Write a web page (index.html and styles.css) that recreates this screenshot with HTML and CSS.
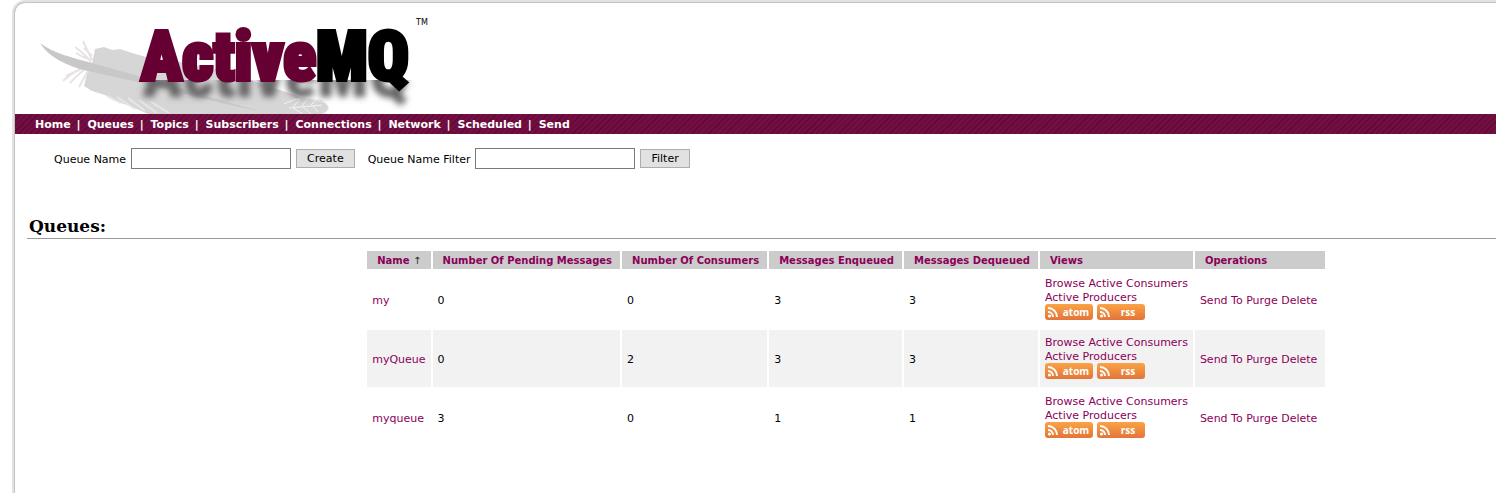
FILE: index.html
```html
<!doctype html>
<html lang="en">
<head>
    <meta charset="utf-8">
    <title>Queues</title>
    <link rel="stylesheet" href="styles.css">
</head>
<body>
<div class="page">
    <header class="header">
        <svg class="logo" width="420" height="111" viewBox="15 3 420 111" role="img" aria-label="ActiveMQ">
            <defs>
                <filter id="soft" x="-5%" y="-30%" width="110%" height="160%"><feGaussianBlur stdDeviation="3" /></filter>
                <clipPath id="ground"><rect x="120" y="80" width="300" height="34" /></clipPath>
            </defs>
            <path d="M92 64L95 49L104 47L112 50L120 49L132 53L150 58L180 62L220 70L262 84L300 97L322 100L329 107L325 114H148L139 110L127 105L116 101L105 95L92 91L84 86L88 70Z" fill="#d6d6d6" />
            <path d="M91 62Q86 55 75 47M91 60Q82 57 76 53M92 60L83 41M92 56L84 48M89 66Q76 69 63 81M89 67Q80 72 70 83M89 69L79 87M88 66L66 76" fill="none" stroke="#e8e2e5" stroke-width="2" />
            <path d="M40 43C53 53 73 58 92 63L142 77L200 94L262 112L200 98L142 83L88 71C65 66 48 56 40 43Z" fill="#c8c8c8" />
            <path d="M107 96l14 7M117 97l18 12M128 98l17 13M139 100l18 13M151 102l18 11" fill="none" stroke="#e6e6e6" stroke-width="2" />
            <path d="M284 104Q302 93 326 103Q333 110 322 114M289 108l33-3M293 107l7-8M302 106l6-8M311 105l6-6M293 108l10 6M303 107l8 7M313 106l5 6" fill="none" stroke="#f5f2f3" stroke-width="1" />
            <g clip-path="url(#ground)"><text class="logo-shade" x="142" y="97" filter="url(#soft)" aria-hidden="true">ActiveMQ</text></g>
            <text class="logo-text" x="141" y="80"><tspan class="logo-active">Active</tspan><tspan class="logo-mq">MQ</tspan></text>
            <text class="logo-tm" x="416" y="25">TM</text>
        </svg>
    </header>
    <nav class="nav">
        <a href="#">Home</a> |
        <a href="#">Queues</a> |
        <a href="#">Topics</a> |
        <a href="#">Subscribers</a> |
        <a href="#">Connections</a> |
        <a href="#">Network</a> |
        <a href="#">Scheduled</a> |
        <a href="#">Send</a>
    </nav>
    <main class="content">
        <div class="forms">
            <form>
                <label for="queue">Queue Name</label>
                <input type="text" id="queue">
                <button>Create</button>
            </form>
            <form>
                <label for="filter">Queue Name Filter</label>
                <input type="text" id="filter">
                <button>Filter</button>
            </form>
        </div>
        <h2>Queues:</h2>
        <div class="table-wrap">
            <table id="queues">
                <thead>
                    <tr>
                        <th><a href="#">Name</a> <span class="sort">↑</span></th>
                        <th><a href="#">Number Of Pending Messages</a></th>
                        <th><a href="#">Number Of Consumers</a></th>
                        <th><a href="#">Messages Enqueued</a></th>
                        <th><a href="#">Messages Dequeued</a></th>
                        <th>Views</th>
                        <th class="operations">Operations</th>
                    </tr>
                </thead>
                <tbody></tbody>
            </table>
        </div>
    </main>
</div>
<script src="queues.js"></script>
</body>
</html>
```
FILE: styles.css
```css
body {
    margin: 0;
    padding: 3px 0 0 15px;
    background: #fff;
    color: #000;
    font-family: Verdana, "DejaVu Sans", sans-serif;
    font-size: 11px;
    overflow: hidden;
}
a {
    color: #8b0059;
    text-decoration: none;
}
.page {
    min-height: calc(100vh - 3px);
    border-radius: 10px 0 0 0;
    box-shadow: 0 0 0 1px #c4c4c4, 0 0 0 3px #e2e2e2;
}
.header {
    height: 111px;
}
.logo {
    display: block;
}
.logo-text,
.logo-shade {
    font-family: Impact, "Roboto Condensed", "Liberation Sans", sans-serif;
    font-size: 68px;
    font-weight: 900;
}
.logo-text {
    stroke-width: 4px;
}
.logo-active {
    fill: #660033;
    stroke: #660033;
}
.logo-mq {
    fill: #000;
    stroke: #000;
}
.logo-shade {
    fill: #666;
}
.logo-tm {
    font-size: 8px;
}
.nav {
    height: 20px;
    padding: 0 17px;
    background: repeating-linear-gradient(135deg, #5f0a35 0 1px, #730e42 1px 4px);
    color: #fff;
    font-weight: bold;
    line-height: 22px;
}
.nav a {
    margin: 0 2px 0 3px;
    color: #fff;
}
.content {
    padding-left: 12px;
}
.forms {
    display: flex;
    gap: 13px;
    padding: 14px 0 0 27px;
}
form {
    display: flex;
    align-items: center;
}
label {
    padding-top: 2px;
}
input {
    box-sizing: border-box;
    width: 160px;
    height: 21px;
    margin: 0 5px;
    border: 1px solid #7a7a7a;
    font-size: 11px;
}
button {
    height: 19px;
    padding: 0 10px;
    border: 1px solid #adadad;
    background: #e1e1e1;
    font-family: inherit;
    font-size: 11px;
}
h2 {
    margin: 46px 0 12px;
    padding: 0 2px;
    border-bottom: 1px solid #999;
    font-family: Georgia, "DejaVu Serif", serif;
    font-size: 17px;
    line-height: 23px;
}
.table-wrap {
    display: grid;
    grid-template-columns: 2fr auto 1fr;
}
table {
    grid-column: 2;
    margin: -2px 0;
    border-spacing: 2px;
}
th {
    height: 18px;
    padding: 0 8px 0 10px;
    background: #ccc;
    color: #8b0059;
    font-size: 10px;
    text-align: left;
    white-space: nowrap;
}
th.operations {
    width: 112px;
}
.sort {
    color: #333;
    font-weight: normal;
}
td {
    padding: 8px 5px 5px;
    line-height: 14px;
    white-space: nowrap;
}
td.views {
    padding: 6px 5px 8px;
}
tbody tr:nth-child(even) td {
    background: #f2f2f2;
}
.feeds {
    display: flex;
    gap: 4px;
    margin-top: -1px;
}
.feed {
    display: flex;
    align-items: center;
    box-sizing: border-box;
    width: 48px;
    height: 16px;
    padding-left: 2px;
    border-radius: 3px;
    background: linear-gradient(#faa346, #e37439);
    color: #fff;
    font-family: "Open Sans", sans-serif;
    font-size: 10px;
    font-weight: bold;
}
.feed span {
    flex: 1;
    text-align: center;
}
```
FILE: queues.js
```js
const queues = [
    ['my', 0, 0, 3, 3],
    ['myQueue', 0, 2, 3, 3],
    ['myqueue', 3, 0, 1, 1]
];
const icon = '<svg width="12" height="12" viewBox="0 0 12 12" fill="none" stroke="#fff" stroke-width="2"><circle cx="2.5" cy="10" r="1.6" fill="#fff" stroke="none"/><path d="M1 6a5 5 0 0 1 5 5M1 2a9 9 0 0 1 9 9"/></svg>';

document.querySelector('#queues tbody').innerHTML = queues.map(([name, ...counts]) => `
    <tr>
        <td><a href="#">${name}</a></td>
        ${counts.map(n => `<td>${n}</td>`).join('')}
        <td class="views">
            <a href="#">Browse</a> <a href="#">Active Consumers</a><br>
            <a href="#">Active Producers</a>
            <div class="feeds">
                <a class="feed" href="#">${icon}<span>atom</span></a>
                <a class="feed" href="#">${icon}<span>rss</span></a>
            </div>
        </td>
        <td><a href="#">Send To</a> <a href="#">Purge</a> <a href="#">Delete</a></td>
    </tr>`).join('');
```
